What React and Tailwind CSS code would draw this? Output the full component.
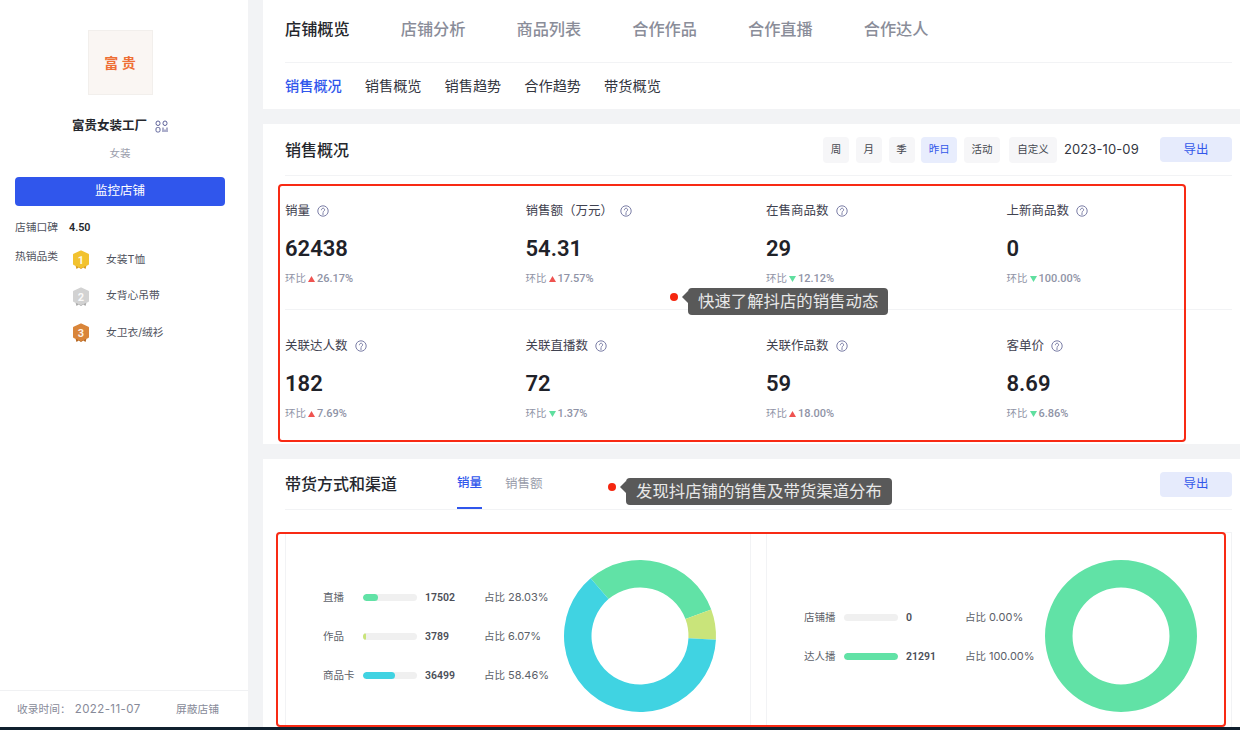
import React from "react";

const FONT = '"Inter","Noto Sans CJK SC",sans-serif';
const NUM = '"Roboto","Noto Sans CJK SC",sans-serif';

function Help() {
  return (
    <svg width="12" height="12" viewBox="0 0 12 12" fill="none" stroke="#6c6f9c" strokeWidth="0.9" className="shrink-0">
      <circle cx="6" cy="6" r="5.2" />
      <path d="M4.4 4.8a1.6 1.6 0 1 1 2.5 1.3c-.6.4-.9.7-.9 1.3" strokeLinecap="round" />
      <circle cx="6" cy="9" r="0.35" fill="#6c6f9c" />
    </svg>
  );
}

function QrIcon() {
  return (
    <svg width="13" height="13" viewBox="0 0 13 13" fill="none" stroke="#5d6199" strokeWidth="1">
      <rect x="1" y="1" width="4" height="4.500" rx="2" />
      <rect x="8" y="1" width="4" height="4.500" rx="2" />
      <rect x="1" y="7.500" width="4" height="4.500" rx="1.400" />
      <path d="M8 7.500v4.500M10 9.500v2.500M12 7.500v4.500" />
    </svg>
  );
}

function Medal({ fill, dark, n }) {
  return (
    <svg width="18" height="20" viewBox="0 0 18 20">
      <path d="M3.500 15.500l1 3.500 2.200-1.500 2.300 1.500 2.300-1.500 2.200 1.500 1-3.500z" fill={dark} />
      <path d="M9 1.500l7 3.200v9.300l-7 3.200-7-3.200V4.700z" fill={fill} stroke={fill} strokeWidth="2" strokeLinejoin="round" />
      <text x="9" y="13.500" textAnchor="middle" fontSize="11" fontWeight="700" fill="#fff" fillOpacity="0.9" fontFamily="Roboto, sans-serif">{n}</text>
    </svg>
  );
}

function Arrow({ up }) {
  return up ? (
    <svg width="7" height="6" viewBox="0 0 7 6" className="mx-[2px]"><path d="M3.500 0L7 6H0z" fill="#ef5350" /></svg>
  ) : (
    <svg width="7" height="6" viewBox="0 0 7 6" className="mx-[2px]"><path d="M3.500 6L7 0H0z" fill="#5fdf9f" /></svg>
  );
}

function Stat({ label, value, pct, up }) {
  return (
    <div className="flex flex-col">
      <div className="flex items-center h-5 text-[12.500px] text-[#3f4250]">
        <span className="mr-[7px]">{label}</span>
        <Help />
      </div>
      <div className="h-[30px] mt-3 flex items-center text-[22px] font-semibold text-[#1f2229]" style={{ fontFamily: NUM }}>{value}</div>
      <div className="h-4 mt-2 flex items-center text-[10.500px] text-[#8f93a6]">
        <span>环比</span>
        <Arrow up={up} />
        <span className="text-[11px] font-medium" style={{ fontFamily: NUM }}>{pct}</span>
      </div>
    </div>
  );
}

function Tag({ children, active, w }) {
  return (
    <div
      style={{ width: w }}
      className={`h-[26px] rounded-sm flex items-center justify-center text-[10.500px] ${active ? "bg-[#e8edfd] text-[#3358ea]" : "bg-[#f6f6f8] text-[#44474f]"}`}
    >
      {children}
    </div>
  );
}

function ExportBtn() {
  return (
    <div className="w-[72px] h-[25px] pt-[1px] rounded-sm bg-[#e6ebfc] text-[#3358ea] text-[12.500px] flex items-center justify-center">导出</div>
  );
}

function BarRow({ label, pct, color, value, share }) {
  return (
    <div className="flex items-center h-[39px] text-[10.500px] text-[#5c5f69]">
      <span className="w-10 shrink-0">{label}</span>
      <div className="w-[54px] h-[7px] rounded-sm bg-[#f0f0f0] overflow-hidden shrink-0">
        <div className="h-full rounded-sm" style={{ width: pct + "%", background: color }} />
      </div>
      <span className="w-[67px] pl-2 shrink-0 font-semibold text-[#4b4e58]" style={{ fontFamily: NUM }}>{value}</span>
      <span className="whitespace-nowrap">占比 <span className="text-[11px]">{share}</span></span>
    </div>
  );
}

const R_O = 76, R_I = 48.500;
function pt(r, deg) {
  const a = (deg * Math.PI) / 180;
  return [80 + r * Math.sin(a), 80 - r * Math.cos(a)];
}
function seg(from, to) {
  const [a, b] = pt(R_O, from), [c, d] = pt(R_O, to), [e, f] = pt(R_I, to), [g, h] = pt(R_I, from);
  const large = to - from > 180 ? 1 : 0;
  return `M${a} ${b}A${R_O} ${R_O} 0 ${large} 1 ${c} ${d}L${e} ${f}A${R_I} ${R_I} 0 ${large} 0 ${g} ${h}Z`;
}

function Donut({ segs }) {
  return (
    <svg width="160" height="160" viewBox="0 0 160 160" className="shrink-0">
      {segs.map((s, i) => <path key={i} d={seg(s[0], s[1])} fill={s[2]} />)}
    </svg>
  );
}

function Tooltip({ className, children }) {
  return (
    <div className={`absolute flex items-start ${className}`}>
      <span className="w-2 h-2 rounded-full bg-[#f5260f] mt-[5px] mr-1" />
      <span className="w-0 h-0 mt-[3px] border-y-[6px] border-y-transparent border-r-[6px] border-r-[#595959]" />
      <span className="h-[27px] flex items-center px-[10px] rounded-sm bg-[#595959] text-[#e8e8e8] text-[16.400px] whitespace-nowrap">{children}</span>
    </div>
  );
}

const row1 = [
  { label: "销量", value: "62438", pct: "26.17%", up: true },
  { label: "销售额（万元）", value: "54.31", pct: "17.57%", up: true },
  { label: "在售商品数", value: "29", pct: "12.12%", up: false },
  { label: "上新商品数", value: "0", pct: "100.00%", up: false },
];
const row2 = [
  { label: "关联达人数", value: "182", pct: "7.69%", up: true },
  { label: "关联直播数", value: "72", pct: "1.37%", up: false },
  { label: "关联作品数", value: "59", pct: "18.00%", up: true },
  { label: "客单价", value: "8.69", pct: "6.86%", up: false },
];

export default function App() {
  return (
    <div className="relative w-[1240px] h-[730px] overflow-hidden bg-[#f2f3f5] flex flex-col" style={{ fontFamily: FONT }}>
      <div className="flex-1 min-h-0 flex gap-[15px]">
        {/* Sidebar */}
        <aside className="w-[248px] shrink-0 bg-white flex flex-col">
          <div className="flex flex-col items-center pt-[30px] pr-2">
            <div className="w-[65px] h-[65px] bg-[#faf6f3] border border-[#f2efec] flex items-center justify-center text-[#ee6f35] text-[14px] font-semibold">富 贵</div>
            <div className="mt-[21px] h-5 flex items-center gap-[8px] text-[12.500px] font-semibold text-[#25272d]">
              <span>富贵女装工厂</span>
              <QrIcon />
            </div>
            <div className="mt-[10px] h-4 flex items-center text-[10.500px] text-[#9a9dab]">女装</div>
          </div>
          <div className="ml-[15px] mr-[23px] mt-[15px] h-[29px] rounded-sm bg-[#3056ec] text-white text-[12.500px] flex items-center justify-center">监控店铺</div>
          <div className="mx-[15px] mt-[14px] h-4 flex items-center text-[10.750px] text-[#50535e]">
            <span className="w-[54px]">店铺口碑</span>
            <span className="font-semibold text-[#25272d]" style={{ fontFamily: NUM }}>4.50</span>
          </div>
          <div className="mx-[15px] mt-[11px] flex text-[10.750px] text-[#50535e]">
            <span className="w-[57px] h-4 mt-[2px]">热销品类</span>
            <div className="flex flex-col gap-[16.500px] mt-[3px]">
              {[
                ["女装T恤", "#f2c22f", "#d99a1c", "1"],
                ["女背心吊带", "#d2d2d2", "#a9a9a9", "2"],
                ["女卫衣/绒衫", "#d9853a", "#b4651f", "3"],
              ].map(([t, c, d, n]) => (
                <div key={t} className="flex items-center h-5 gap-[16px]">
                  <Medal fill={c} dark={d} n={n} />
                  <span>{t}</span>
                </div>
              ))}
            </div>
          </div>
          <div className="mt-auto h-[37px] border-t border-[#f0f1f3] flex items-center justify-between pl-[17px] pr-[29px] pt-[2px] text-[10.750px] text-[#878a99]">
            <span>收录时间：<span className="ml-1 text-[11.500px] tracking-[0.4px]">2022-11-07</span></span>
            <span>屏蔽店铺</span>
          </div>
        </aside>

        {/* Main */}
        <main className="flex-1 min-w-0 flex flex-col gap-[15px]">
          <section className="h-[109px] shrink-0 bg-white pl-[22px] pr-2">
            <div className="h-[63px] border-b border-[#f2f3f5] flex items-center gap-[51px] text-[16.200px] text-[#8a8d99] pb-[3px] font-medium">
              <span className="text-[#25272d]">店铺概览</span>
              <span>店铺分析</span>
              <span>商品列表</span>
              <span>合作作品</span>
              <span>合作直播</span>
              <span>合作达人</span>
            </div>
            <div className="h-[46px] flex items-center gap-[23px] text-[14.200px] text-[#33363f]">
              <span className="text-[#3056ec] font-medium">销售概况</span>
              <span>销售概览</span>
              <span>销售趋势</span>
              <span>合作趋势</span>
              <span>带货概览</span>
            </div>
          </section>

          <section className="h-[320px] shrink-0 bg-white pl-[22px] pr-2">
            <div className="h-[52px] border-b border-[#f2f3f5] flex items-center justify-between">
              <span className="text-[16px] font-medium text-[#25272d]">销售概况</span>
              <div className="flex items-center">
                <div className="flex items-center gap-[6.750px]">
                  <Tag w={26}>周</Tag>
                  <Tag w={26}>月</Tag>
                  <Tag w={26}>季</Tag>
                  <Tag w={36} active>昨日</Tag>
                  <Tag w={36}>活动</Tag>
                </div>
                <div className="ml-[9px]"><Tag w={48}>自定义</Tag></div>
                <span className="ml-[7px] w-[96px] text-[13px] tracking-[0.1px] text-[#33363f]">2023-10-09</span>
                <ExportBtn />
              </div>
            </div>
            <div className="grid grid-cols-[repeat(4,240.500px)] border-b border-[#f2f3f5] pt-[25px] pb-[22px]">
              {row1.map((s) => <Stat key={s.label} {...s} />)}
            </div>
            <div className="grid grid-cols-[repeat(4,240.500px)] pt-[26px]">
              {row2.map((s) => <Stat key={s.label} {...s} />)}
            </div>
          </section>

          <section className="flex-1 min-h-0 bg-white pl-[22px] pr-2">
            <div className="h-[51px] border-b border-[#f2f3f5] flex items-center">
              <span className="w-[172px] text-[16px] font-medium text-[#25272d]">带货方式和渠道</span>
              <div className="h-full relative flex items-center gap-[23px] text-[12.500px] text-[#9a9dab]">
                <span className="h-full flex items-center text-[#3056ec] font-medium border-b-2 border-[#3056ec]">销量</span>
                <span>销售额</span>
              </div>
              <div className="ml-auto"><ExportBtn /></div>
            </div>
            <div className="mt-[22px] flex gap-[15px] h-[200px]">
              <div className="w-[466px] h-full border border-[#f2f3f5] flex items-start pl-[37px] pt-[23px]">
                <div className="pt-[22px] w-[237px] shrink-0">
                  <BarRow label="直播" pct={28} color="#61e2a6" value="17502" share="28.03%" />
                  <BarRow label="作品" pct={6} color="#c9e47a" value="3789" share="6.07%" />
                  <BarRow label="商品卡" pct={60} color="#40d3e2" value="36499" share="58.46%" />
                </div>
                <Donut segs={[[-40.5, 69.6, "#61e2a6"], [69.6, 92.8, "#c9e47a"], [92.8, 319.5, "#40d3e2"]]} />
              </div>
              <div className="flex-1 h-full border border-[#f2f3f5] flex items-start pl-[37px] pt-[23px]">
                <div className="pt-[42px] w-[237px] shrink-0">
                  <BarRow label="店铺播" pct={0} color="#61e2a6" value="0" share="0.00%" />
                  <BarRow label="达人播" pct={100} color="#61e2a6" value="21291" share="100.00%" />
                </div>
                <Donut segs={[[0, 180, "#61e2a6"], [180, 360, "#61e2a6"]]} />
              </div>
            </div>
          </section>
        </main>
      </div>
      <div className="h-[3px] shrink-0 bg-[#10202e]" />

      {/* Annotation overlays */}
      <div className="absolute left-[278px] top-[184px] w-[908px] h-[258px] border-2 border-[#f82a14] rounded-[4px]" />
      <div className="absolute left-[276px] top-[532px] w-[950px] h-[195px] border-2 border-[#f82a14] rounded-[4px]" />
      <Tooltip className="left-[670px] top-[288px]">快速了解抖店的销售动态</Tooltip>
      <Tooltip className="left-[608px] top-[478px]">发现抖店铺的销售及带货渠道分布</Tooltip>
    </div>
  );
}
